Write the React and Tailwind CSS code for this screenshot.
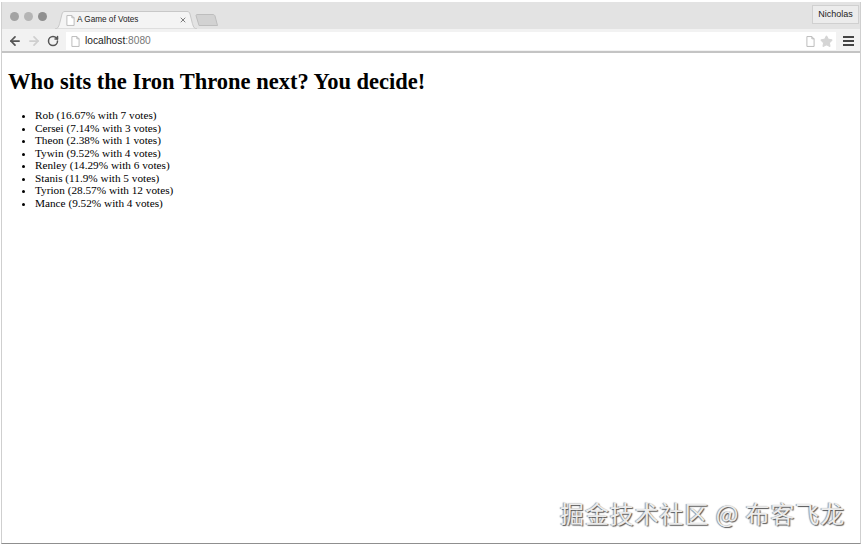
import { ArrowLeft, ArrowRight, RotateCw, X, Star } from 'lucide-react';

const votes = [
  'Rob (16.67% with 7 votes)',
  'Cersei (7.14% with 3 votes)',
  'Theon (2.38% with 1 votes)',
  'Tywin (9.52% with 4 votes)',
  'Renley (14.29% with 6 votes)',
  'Stanis (11.9% with 5 votes)',
  'Tyrion (28.57% with 12 votes)',
  'Mance (9.52% with 4 votes)',
];

function PageIcon({ className }) {
  return (
    <svg viewBox="0 0 10 12" className={className} fill="#fff" stroke="#b5b5b5" strokeWidth="1">
      <path d="M1 .5h5.500L9 3v8.500H1z" />
      <path d="M6.500 .5V3H9" fill="none" />
    </svg>
  );
}

export default function App() {
  return (
    <div className="relative w-[863px] h-[546px] overflow-hidden bg-white pt-[2px] pr-[2px] pb-[2px] pl-[1px] font-['Liberation_Sans',sans-serif]">
      <div className="flex h-full flex-col border-x border-b border-x-[#cfcfcf] border-b-[#8f8f8f]">
        {/* tab strip */}
        <div className="flex h-[27px] shrink-0 items-end bg-[#e3e3e3] pl-[8px]">
          <div className="mb-[8px] flex gap-[5px] self-end">
            <span className="h-[9px] w-[9px] rounded-full bg-[#a3a3a3]" />
            <span className="h-[9px] w-[9px] rounded-full bg-[#b5b5b5]" />
            <span className="h-[9px] w-[9px] rounded-full bg-[#8f8f8f]" />
          </div>
          <div className="relative ml-[8px] flex h-[18px] w-[142px] items-center pl-[11px] pr-[10px]">
            <svg viewBox="0 0 142 18" className="absolute inset-0 h-full w-full">
              <path d="M0 18C3 18 4 15 5 11L7 3C7.500 1 8.500 .5 10 .5H132C133.500 .5 134.500 1 135 3L137 11C138 15 139 18 142 18Z" fill="#f4f4f4" stroke="#c8c8c8" />
            </svg>
            <PageIcon className="relative h-[11px] w-[9px] shrink-0" />
            <span className="relative ml-[2px] flex-1 text-[8.200px] leading-none text-[#222]">A Game of Votes</span>
            <X className="relative h-[8px] w-[8px] text-[#666]" strokeWidth={2.5} />
          </div>
          <svg viewBox="0 0 23 12" className="mb-[3px] ml-[-2px] h-[12px] w-[23px]">
            <path d="M4 11.500L1 1.500C1 1 1.500 .5 2 .5H18C19 .5 19.500 1 20 2L22.500 11.500Z" fill="#d2d2d2" stroke="#bdbdbd" />
          </svg>
          <div className="ml-auto mb-[5px] mr-[1px] flex h-[19px] w-[47px] items-center justify-center border border-[#d0d0d0] bg-[#ececec] text-[9px] text-[#222]">
            Nicholas
          </div>
        </div>

        {/* toolbar */}
        <div className="flex h-[24px] shrink-0 items-center border-b-[2px] border-[#c4c4c4] bg-[#f2f2f2] pl-[6px] pr-[6px] pt-[2px]">
          <ArrowLeft className="h-[14px] w-[14px] text-[#555]" strokeWidth={3} />
          <ArrowRight className="ml-[5px] h-[14px] w-[14px] text-[#cfcfcf]" strokeWidth={3} />
          <RotateCw className="ml-[6px] h-[12px] w-[12px] text-[#555]" strokeWidth={3} />
          <div className="ml-[7px] flex h-[18px] flex-1 items-center bg-white pl-[5px] pr-[3px]">
            <PageIcon className="h-[11px] w-[9px] shrink-0" />
            <span className="ml-[5px] flex-1 text-[10.200px] leading-none text-[#222]">
              localhost<span className="text-[#777]">:8080</span>
            </span>
            <PageIcon className="h-[11px] w-[9px] shrink-0" />
            <Star className="ml-[5px] h-[13px] w-[13px] text-[#d5d5d5]" fill="#d5d5d5" />
          </div>
          <div className="ml-[7px] flex w-[11px] flex-col gap-[2px]">
            <span className="h-[2px] bg-[#444]" />
            <span className="h-[2px] bg-[#444]" />
            <span className="h-[2px] bg-[#444]" />
          </div>
        </div>

        {/* page */}
        <div className="flex-1 bg-white pl-[6px] pt-[15px] font-['Liberation_Serif',serif] text-black">
          <h1 className="text-[22.500px] font-bold leading-[27px]">Who sits the Iron Throne next? You decide!</h1>
          <ul className="mt-[14px] list-disc pl-[27px] text-[11.250px] leading-[12.500px]">
            {votes.map((v) => (
              <li key={v}>{v}</li>
            ))}
          </ul>
        </div>
      </div>

      {/* watermark */}
      <div className="absolute left-[560px] top-[498px] whitespace-nowrap font-['Noto_Sans_CJK_SC',sans-serif] text-[24px] leading-[30px] tracking-[0.900px] text-[#ececec] [text-shadow:1px_1px_1px_#555,-1px_0_1px_#999]">
        掘金技术社区 @ 布客飞龙
      </div>
    </div>
  );
}
